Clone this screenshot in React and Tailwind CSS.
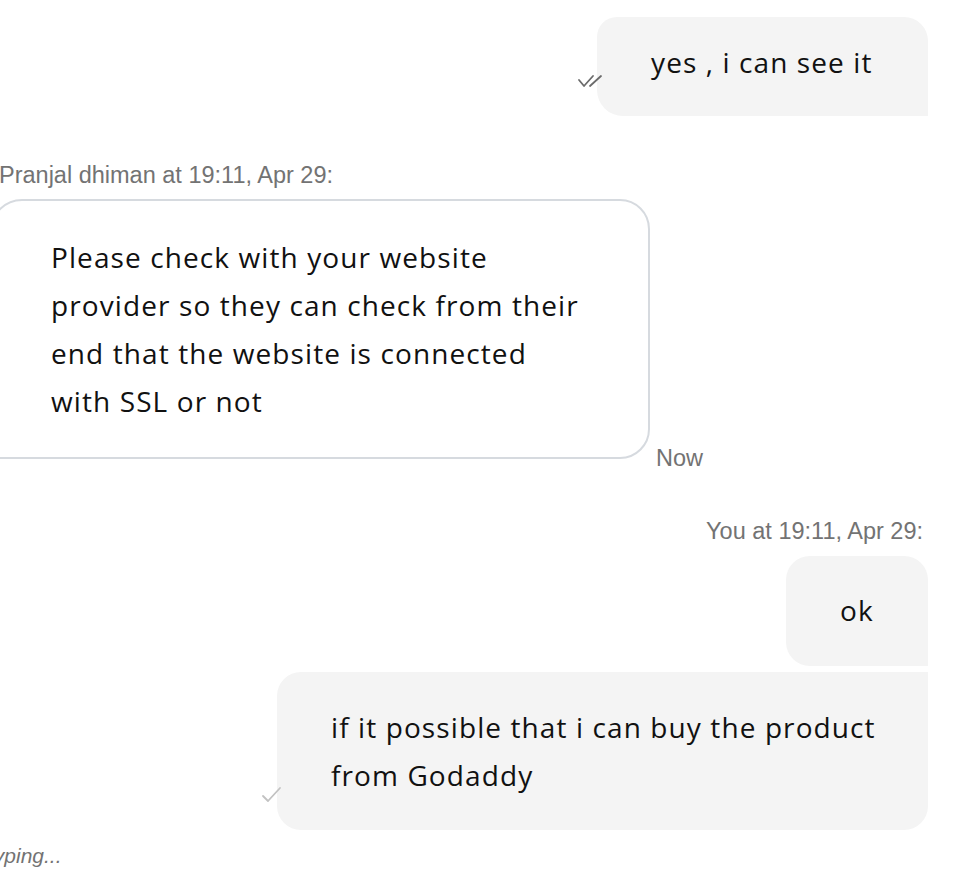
import React from "react";

const body = { fontFamily: "'Open Sans', 'Noto Sans', sans-serif", letterSpacing: "1.1px" };
const meta = { fontFamily: "'Liberation Sans', Arial, sans-serif" };

function DoubleCheck() {
  return (
    <svg width="28" height="16" viewBox="0 0 28 16" className="absolute left-[-20px] top-[57px]" fill="none" stroke="#6b6b6b" strokeWidth="1.8" strokeLinecap="round" strokeLinejoin="round">
      <path d="M2 6 L7 12 L16 2" />
      <path d="M13 12 L24 2" />
    </svg>
  );
}

function SingleCheck() {
  return (
    <svg width="22" height="18" viewBox="0 0 22 18" className="absolute left-[-16px] top-[114px]" fill="none" stroke="#c2c2c2" strokeWidth="1.8" strokeLinecap="round" strokeLinejoin="round">
      <path d="M2 10 L7 15 L19 2" />
    </svg>
  );
}

export default function App() {
  return (
    <div className="w-[954px] h-[882px] overflow-hidden bg-white relative">
      <div className="flex flex-col pt-[17px]">
        {/* top outgoing bubble */}
        <div className="flex justify-end pr-[26px]">
          <div className="relative w-[331px] h-[99px] bg-[#f4f4f4] rounded-tl-[20px] rounded-tr-[24px] rounded-bl-[26px] flex items-center pl-[54px] text-[28px] leading-[48px] text-[#111]" style={body}>
            <DoubleCheck />
            <span className="whitespace-nowrap -mt-[9px]">yes , i can see it</span>
          </div>
        </div>

        {/* incoming meta */}
        <div className="mt-[46px] ml-[-1px] text-[23.5px] leading-[26px] text-[#737373]" style={meta}>
          Pranjal dhiman at 19:11, Apr 29:
        </div>

        {/* incoming bubble */}
        <div className="flex items-end mt-[11px] ml-[-10px]">
          <div className="w-[660px] h-[260px] border-2 border-[#d6dadf] rounded-tl-[32px] rounded-tr-[30px] rounded-br-[30px] rounded-bl-none pl-[59px] pt-[32px] text-[28px] leading-[48px] text-[#111]" style={body}>
            <div className="whitespace-nowrap">Please check with your website</div>
            <div className="whitespace-nowrap">provider so they can check from their</div>
            <div className="whitespace-nowrap">end that the website is connected</div>
            <div className="whitespace-nowrap">with SSL or not</div>
          </div>
          <div className="ml-[6px] mb-[-12px] text-[23.5px] leading-[26px] text-[#737373]" style={meta}>Now</div>
        </div>

        {/* outgoing meta */}
        <div className="mt-[59px] pr-[31px] text-right text-[23.5px] leading-[26px] text-[#737373]" style={meta}>
          You at 19:11, Apr 29:
        </div>

        {/* ok bubble */}
        <div className="flex justify-end pr-[26px] mt-[12px]">
          <div className="w-[142px] h-[110px] bg-[#f4f4f4] rounded-tl-[24px] rounded-tr-[24px] rounded-bl-[24px] flex items-center justify-center text-[28px] leading-[48px] text-[#111]" style={body}>
            <span className="-mt-[2px]">ok</span>
          </div>
        </div>

        {/* last bubble */}
        <div className="flex justify-end pr-[26px] mt-[6px]">
          <div className="relative w-[651px] h-[158px] bg-[#f4f4f4] rounded-tl-[24px] rounded-bl-[24px] rounded-br-[24px] pl-[54px] pt-[31px] text-[28px] leading-[48px] text-[#111]" style={body}>
            <SingleCheck />
            <div className="whitespace-nowrap">if it possible that i can buy the product</div>
            <div className="whitespace-nowrap">from Godaddy</div>
          </div>
        </div>

        {/* typing */}
        <div className="mt-[14px] ml-[-12px] text-[21px] leading-[24px] italic text-[#737373]" style={meta}>
          typing...
        </div>
      </div>
    </div>
  );
}
